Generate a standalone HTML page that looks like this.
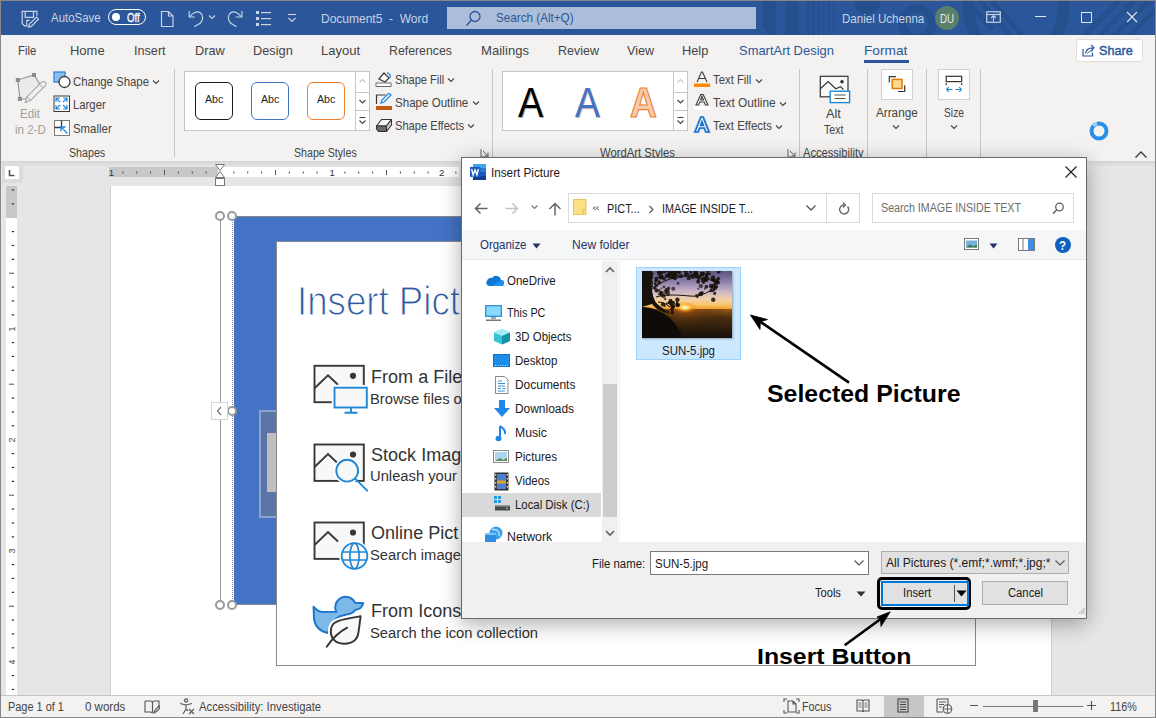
<!DOCTYPE html>
<html><head><meta charset="utf-8"><style>
html,body{margin:0;padding:0;}
body{width:1156px;height:718px;overflow:hidden;position:relative;background:#f3f2f1;font-family:"Liberation Sans",sans-serif;}
body div{position:absolute;box-sizing:border-box;}
.t{white-space:pre;line-height:1;transform-origin:0 0;}
</style></head><body>
<div style="left:0px;top:0px;width:1156px;height:35px;background:#2b579a;"></div>
<svg style="position:absolute;left:740px;top:1px;" width="415" height="34" viewBox="0 0 415 34"><defs><clipPath id="tbc"><rect width="415" height="34"/></clipPath></defs><g clip-path="url(#tbc)" fill="#264f8e">
<path d="M23 0h13v34h-6l-7-7z"/><rect x="45.5" y="0" width="13.5" height="34"/><rect x="67" y="0" width="2.7" height="34"/><rect x="72" y="0" width="3" height="34"/><rect x="77.5" y="0" width="2.5" height="34"/><rect x="82.7" y="0" width="1.7" height="34"/><rect x="88" y="0" width="1.6" height="34"/><rect x="93" y="0" width="1.5" height="30"/>
<circle cx="127.6" cy="0.7" r="13"/>
<circle cx="177" cy="22.4" r="15" fill="none" stroke="#264f8e" stroke-width="8"/>
<circle cx="276" cy="8" r="47.5" fill="none" stroke="#264f8e" stroke-width="11"/>
<g stroke="#264f8e" stroke-width="5"><path d="M240 0l30 34M252 0l30 34M228 0l24 28"/><path d="M345 34l34-34M360 34l34-34M375 34l34-34M390 34l25-25"/></g>
</g></svg>
<svg style="position:absolute;left:21px;top:10px;" width="19" height="19" viewBox="0 0 19 19"><g fill="none" stroke="#c8d3e6" stroke-width="1.2"><path d="M15.9 5.8V1.4H1.2V13.5L3.5 15.8H5.8V10.4H8.8"/><path d="M4.2 1.4V7.3H12.5V1.4"/><path d="M7.5 17.2l0.8-2.8 7.2-7.2 2 2-7.2 7.2z"/></g></svg>
<div class="t" style="left:51.20px;top:12px;font-size:12.5px;color:#c8d3e6;transform:scaleX(0.9151);">AutoSave</div>
<div style="left:108px;top:9px;width:38px;height:16px;border:1.4px solid #fff;border-radius:8px;"></div>
<div style="left:112px;top:13.3px;width:8px;height:8px;background:#fff;border-radius:50%;"></div>
<div class="t" style="left:127.00px;top:12px;font-size:12.5px;color:#fff;transform:scaleX(0.7769);-webkit-text-stroke:0.3px #fff;">Off</div>
<svg style="position:absolute;left:160px;top:10px;" width="15" height="18" viewBox="0 0 15 18"><path d="M1.5 1.5h7l4.5 4.5v10.5h-11.5z M8.5 1.5v4.5h4.5" fill="none" stroke="#c8d3e6" stroke-width="1.2"/></svg>
<svg style="position:absolute;left:187px;top:10px;" width="18" height="18" viewBox="0 0 18 18"><path d="M2.2 1.1V7H7.8" fill="none" stroke="#c8d3e6" stroke-width="1.2"/><path d="M3 6.5C5.5 3 9.8 0.6 13 2.5 16.5 5 16.5 9.5 13.5 13L7.2 16.7" fill="none" stroke="#c8d3e6" stroke-width="1.2"/></svg>
<svg style="position:absolute;left:208px;top:14px;" width="8" height="6" viewBox="0 0 8 6"><path d="M1 1.5l3 3 3-3" fill="none" stroke="#c8d3e6" stroke-width="1.1"/></svg>
<svg style="position:absolute;left:226px;top:10px;" width="18" height="18" viewBox="0 0 18 18"><path d="M15.9 1.1V7H9.7" fill="none" stroke="#c8d3e6" stroke-width="1.2"/><path d="M15 6.5C12.5 3 8 0.6 5 2.5 1.5 5 1.5 9.5 4.5 13L10.5 16.7" fill="none" stroke="#c8d3e6" stroke-width="1.2"/></svg>
<svg style="position:absolute;left:255px;top:10px;" width="17" height="17" viewBox="0 0 17 17"><g fill="#c8d3e6"><rect x="1" y="1" width="3" height="3"/><rect x="1" y="7" width="3" height="3"/><rect x="1" y="13" width="3" height="3"/><rect x="6" y="2" width="10" height="1.2"/><rect x="6" y="8" width="10" height="1.2"/><rect x="6" y="14" width="10" height="1.2"/></g></svg>
<svg style="position:absolute;left:287px;top:13px;" width="10" height="10" viewBox="0 0 10 10"><path d="M1 1.5h8" stroke="#c8d3e6" stroke-width="1.1"/><path d="M1.5 5l3.5 3.5 3.5-3.5" fill="none" stroke="#c8d3e6" stroke-width="1.1"/></svg>
<div class="t" style="left:321.30px;top:12px;font-size:13.65px;color:#c8d3e6;transform:scaleX(0.8795);">Document5  -  Word</div>
<div style="left:447px;top:7px;width:309px;height:22px;background:#abbdd8;"></div>
<svg style="position:absolute;left:465px;top:10px;" width="17" height="17" viewBox="0 0 17 17"><circle cx="10" cy="6.5" r="5" fill="none" stroke="#2b579a" stroke-width="1.3"/><path d="M6.5 10l-5 5.5" stroke="#2b579a" stroke-width="1.4"/></svg>
<div class="t" style="left:496.40px;top:11px;font-size:13.1px;color:#2b579a;transform:scaleX(0.8920);">Search (Alt+Q)</div>
<div class="t" style="left:841.70px;top:12px;font-size:13.65px;color:#c8d3e6;transform:scaleX(0.8472);">Daniel Uchenna</div>
<div style="left:935px;top:6px;width:24px;height:24px;background:#5b7f6a;border-radius:50%;"></div>
<div class="t" style="left:940.20px;top:12px;font-size:13.1px;color:#e6ecef;transform:scaleX(0.7401);">DU</div>
<svg style="position:absolute;left:986px;top:11px;" width="16" height="13" viewBox="0 0 16 13"><rect x="0.75" y="0.75" width="13.5" height="10.5" fill="none" stroke="#c8d3e6" stroke-width="1.2"/><path d="M0.75 3.5h13.5" stroke="#c8d3e6" stroke-width="1.2"/><path d="M7.5 10.5v-5.5M5 7l2.5-2.5 2.5 2.5" fill="none" stroke="#c8d3e6" stroke-width="1.1"/></svg>
<div style="left:1035px;top:16px;width:11px;height:1.2px;background:#dde4f0;"></div>
<div style="left:1081px;top:12px;width:10.5px;height:10.5px;border:1.2px solid #dde4f0;"></div>
<svg style="position:absolute;left:1126px;top:11px;" width="12" height="12" viewBox="0 0 12 12"><path d="M1 1l10 10M11 1l-10 10" stroke="#dde4f0" stroke-width="1.2"/></svg>
<div class="t" style="left:18.20px;top:44px;font-size:13.5px;color:#444444;transform:scaleX(0.8460);">File</div>
<div class="t" style="left:70.00px;top:44px;font-size:13.5px;color:#444444;transform:scaleX(0.9606);">Home</div>
<div class="t" style="left:134.00px;top:44px;font-size:13.5px;color:#444444;transform:scaleX(0.9359);">Insert</div>
<div class="t" style="left:195.00px;top:44px;font-size:13.5px;color:#444444;transform:scaleX(0.9450);">Draw</div>
<div class="t" style="left:253.00px;top:44px;font-size:13.5px;color:#444444;transform:scaleX(0.9470);">Design</div>
<div class="t" style="left:321.00px;top:44px;font-size:13.5px;color:#444444;transform:scaleX(0.9623);">Layout</div>
<div class="t" style="left:389.00px;top:44px;font-size:13.5px;color:#444444;transform:scaleX(0.9125);">References</div>
<div class="t" style="left:481.00px;top:44px;font-size:13.5px;color:#444444;transform:scaleX(0.9693);">Mailings</div>
<div class="t" style="left:558.00px;top:44px;font-size:13.5px;color:#444444;transform:scaleX(0.9254);">Review</div>
<div class="t" style="left:626.90px;top:44px;font-size:13.5px;color:#444444;transform:scaleX(0.9328);">View</div>
<div class="t" style="left:682.20px;top:44px;font-size:13.5px;color:#444444;transform:scaleX(0.9471);">Help</div>
<div class="t" style="left:739.00px;top:44px;font-size:13.5px;color:#2b579a;transform:scaleX(0.9582);">SmartArt Design</div>
<div class="t" style="left:864.40px;top:44px;font-size:13.5px;color:#2b579a;transform:scaleX(1.0151);">Format</div>
<div style="left:864px;top:60px;width:45px;height:3px;background:#2b579a;"></div>
<div style="left:1076px;top:39px;width:67px;height:23px;background:#fff;border:1px solid #e1dfdd;border-radius:3px;"></div>
<svg style="position:absolute;left:1082px;top:43px;" width="15" height="15" viewBox="0 0 15 15"><path d="M1 6v7h9.5V9.5" fill="none" stroke="#2b579a" stroke-width="1.2"/><path d="M3.5 10.5C4 7 6.5 4.8 11 4.8M9 1.8l3 3-3 3" fill="none" stroke="#2b579a" stroke-width="1.2"/><path d="M5.5 10.5C6.5 8.5 8.5 7.6 11 7.6" fill="none" stroke="#2b579a" stroke-width="1"/></svg>
<div class="t" style="left:1099.20px;top:44px;font-size:13.65px;color:#2b579a;transform:scaleX(0.9254);-webkit-text-stroke:0.45px #2b579a;">Share</div>
<svg style="position:absolute;left:14px;top:72px;" width="34" height="34" viewBox="0 0 34 34"><path d="M3.8 8L20 3 27 14 12 27 5.9 26.9z" fill="#ebebeb" stroke="#9a9a9a" stroke-width="1.2"/>
<g fill="#8a8a8a"><rect x="1.8" y="6" width="4" height="4"/><rect x="18" y="1" width="4" height="4"/><rect x="3.9" y="24.9" width="4" height="4"/></g>
<path d="M11.3 30.5l1.8-5.8 14.5-14.5a2.4 2.4 0 0 1 3.6 3.6L16.7 28.3z" fill="#f0f0f0" stroke="#a6a6a6" stroke-width="1.1"/><path d="M25.5 12.3l3.4 3.4M13.1 24.7l3.6 3.6" stroke="#a6a6a6" stroke-width="1"/></svg>
<div class="t" style="left:20.00px;top:108px;font-size:12.5px;color:#a19f9d;transform:scaleX(0.9286);">Edit</div>
<div class="t" style="left:14.50px;top:124px;font-size:12.5px;color:#a19f9d;transform:scaleX(0.9235);">in 2-D</div>
<svg style="position:absolute;left:53px;top:71px;" width="18" height="18" viewBox="0 0 18 18"><rect x="1" y="1" width="11" height="10" fill="#8cbdf0" stroke="#2b7cd3" stroke-width="1.2"/><circle cx="11.5" cy="11" r="5.5" fill="#fff" stroke="#3b3a39" stroke-width="1.3"/></svg>
<div class="t" style="left:73.30px;top:76px;font-size:12.8px;color:#444444;transform:scaleX(0.8899);">Change Shape</div>
<svg style="position:absolute;left:152px;top:79px;" width="8" height="6" viewBox="0 0 8 6"><path d="M1 1.5l3 3 3-3" fill="none" stroke="#444" stroke-width="1.1"/></svg>
<svg style="position:absolute;left:53px;top:95px;" width="18" height="18" viewBox="0 0 18 18"><rect x="1" y="1" width="15.5" height="15.5" fill="#fff" stroke="#3b3a39" stroke-width="1"/><g stroke="#1e88e5" stroke-width="1.2" fill="none"><path d="M3 7V3h4M10 3h4v4M14 10v4h-4M7 14H3v-4M3.5 3.5l3.5 3.5M13.5 3.5l-3.5 3.5M13.5 13.5l-3.5-3.5M3.5 13.5l3.5-3.5"/></g></svg>
<div class="t" style="left:73.30px;top:99px;font-size:12.8px;color:#444444;transform:scaleX(0.8837);">Larger</div>
<svg style="position:absolute;left:53px;top:119px;" width="18" height="18" viewBox="0 0 18 18"><rect x="1.5" y="1.5" width="15" height="15" fill="#fff" stroke="#7a7a7a" stroke-width="1"/><path d="M1.5 8.5H8.5V1.5" fill="none" stroke="#3b3a39" stroke-width="1.3"/><path d="M14.5 14.5L8 8M8 12.5V8h4.5" fill="none" stroke="#1e88e5" stroke-width="1.3"/></svg>
<div class="t" style="left:73.30px;top:123px;font-size:12.8px;color:#444444;transform:scaleX(0.8919);">Smaller</div>
<div class="t" style="left:69.40px;top:147px;font-size:12.5px;color:#444444;transform:scaleX(0.8538);">Shapes</div>
<div style="left:174px;top:69px;width:1px;height:88px;background:#c8c6c4;"></div>
<div style="left:184px;top:71px;width:186px;height:60px;background:#fff;border:1px solid #c8c6c4;"></div>
<div style="left:355px;top:71px;width:15px;height:60px;border-left:1px solid #c8c6c4;"></div>
<div style="left:355px;top:92px;width:15px;height:19px;border:1px solid #c8c6c4;background:#fff;"></div>
<div style="left:355px;top:111px;width:15px;height:20px;border:1px solid #c8c6c4;border-top:none;"></div>
<svg style="position:absolute;left:356px;top:73px;" width="13" height="16" viewBox="0 0 13 16"><path d="M3.5 9.5l3-3 3 3" fill="none" stroke="#c8c6c4" stroke-width="1.1"/></svg>
<svg style="position:absolute;left:356px;top:93px;" width="13" height="17" viewBox="0 0 13 17"><path d="M3.5 7l3 3 3-3" fill="none" stroke="#444" stroke-width="1.1"/></svg>
<svg style="position:absolute;left:356px;top:112px;" width="13" height="18" viewBox="0 0 13 18"><path d="M3.5 5.5h6" stroke="#444" stroke-width="1.1"/><path d="M3.5 8.5l3 3 3-3" fill="none" stroke="#444" stroke-width="1.1"/></svg>
<div style="left:195px;top:82px;width:38px;height:38px;border:1.9px solid #1a1a1a;border-radius:6px;background:#fff;"></div>
<div class="t" style="left:205.00px;top:93px;font-size:11.65px;color:#1f1f1f;transform:scaleX(0.9167);">Abc</div>
<div style="left:251px;top:82px;width:38px;height:38px;border:1.9px solid #4472c4;border-radius:6px;background:#fff;"></div>
<div class="t" style="left:260.80px;top:93px;font-size:11.65px;color:#1f1f1f;transform:scaleX(0.9167);">Abc</div>
<div style="left:307px;top:82px;width:38px;height:38px;border:1.9px solid #ed7d31;border-radius:6px;background:#fff;"></div>
<div class="t" style="left:316.80px;top:93px;font-size:11.65px;color:#1f1f1f;transform:scaleX(0.9167);">Abc</div>
<div class="t" style="left:294.40px;top:147px;font-size:12.5px;color:#444444;transform:scaleX(0.8512);">Shape Styles</div>
<svg style="position:absolute;left:375px;top:70px;" width="18" height="18" viewBox="0 0 18 18"><path d="M4 9l5-6 5 5-4 4z" fill="#fff" stroke="#3b3a39" stroke-width="1.2"/><path d="M12 3c2 0 4 2 3 5" fill="none" stroke="#1e88e5" stroke-width="1.4"/><rect x="1" y="13" width="15" height="3.5" fill="#fff" stroke="#6e6e6e" stroke-width="1"/></svg>
<div class="t" style="left:395.40px;top:74px;font-size:12.8px;color:#444444;transform:scaleX(0.8643);">Shape Fill</div>
<svg style="position:absolute;left:447px;top:77px;" width="8" height="6" viewBox="0 0 8 6"><path d="M1 1.5l3 3 3-3" fill="none" stroke="#444" stroke-width="1.1"/></svg>
<svg style="position:absolute;left:375px;top:93px;" width="18" height="18" viewBox="0 0 18 18"><path d="M1.5 11V2h9" fill="none" stroke="#3b3a39" stroke-width="1.2"/><path d="M6 10l1-3 7-7 2 2-7 7z" fill="#fff" stroke="#1e88e5" stroke-width="1.3"/><rect x="1" y="13" width="16" height="4" fill="#c55a11"/></svg>
<div class="t" style="left:395.40px;top:97px;font-size:12.8px;color:#444444;transform:scaleX(0.9035);">Shape Outline</div>
<svg style="position:absolute;left:472px;top:100px;" width="8" height="6" viewBox="0 0 8 6"><path d="M1 1.5l3 3 3-3" fill="none" stroke="#444" stroke-width="1.1"/></svg>
<svg style="position:absolute;left:375px;top:117px;" width="18" height="16" viewBox="0 0 18 16"><path d="M1.5 9L6.5 2.5H16.5L11.5 9z" fill="#f5f5f5" stroke="#333" stroke-width="1.1" stroke-linejoin="round"/><path d="M1.5 9H11.5V14.5H3.5L1.5 12z" fill="#6a6a6a" stroke="#333" stroke-width="1.1" stroke-linejoin="round"/><path d="M11.5 9L16.5 2.5V8L11.5 14.5z" fill="#d0d0d0" stroke="#333" stroke-width="1.1" stroke-linejoin="round"/></svg>
<div class="t" style="left:395.40px;top:120px;font-size:12.8px;color:#444444;transform:scaleX(0.8696);">Shape Effects</div>
<svg style="position:absolute;left:467px;top:123px;" width="8" height="6" viewBox="0 0 8 6"><path d="M1 1.5l3 3 3-3" fill="none" stroke="#444" stroke-width="1.1"/></svg>
<svg style="position:absolute;left:480px;top:148px;" width="10" height="10" viewBox="0 0 10 10"><path d="M1 1h0M1 1v8h8" fill="none" stroke="#666" stroke-width="1"/><path d="M3 3l5 5M8 4.5V8H4.5" fill="none" stroke="#666" stroke-width="1"/></svg>
<div style="left:492px;top:69px;width:1px;height:88px;background:#c8c6c4;"></div>
<div style="left:502px;top:71px;width:186px;height:60px;background:#fff;border:1px solid #c8c6c4;"></div>
<div style="left:673px;top:71px;width:15px;height:60px;border-left:1px solid #c8c6c4;"></div>
<div style="left:673px;top:92px;width:15px;height:19px;border:1px solid #c8c6c4;background:#fff;"></div>
<div style="left:673px;top:111px;width:15px;height:20px;border:1px solid #c8c6c4;border-top:none;"></div>
<svg style="position:absolute;left:674px;top:73px;" width="13" height="16" viewBox="0 0 13 16"><path d="M3.5 9.5l3-3 3 3" fill="none" stroke="#c8c6c4" stroke-width="1.1"/></svg>
<svg style="position:absolute;left:674px;top:93px;" width="13" height="17" viewBox="0 0 13 17"><path d="M3.5 7l3 3 3-3" fill="none" stroke="#444" stroke-width="1.1"/></svg>
<svg style="position:absolute;left:674px;top:112px;" width="13" height="18" viewBox="0 0 13 18"><path d="M3.5 5.5h6" stroke="#444" stroke-width="1.1"/><path d="M3.5 8.5l3 3 3-3" fill="none" stroke="#444" stroke-width="1.1"/></svg>
<div class="t" style="left:518.20px;top:81px;font-size:43.0px;color:#000;transform:scaleX(0.8821);text-shadow:1px 1px 1px rgba(0,0,0,0.35);">A</div>
<div class="t" style="left:575.30px;top:81px;font-size:43.0px;color:#4472c4;transform:scaleX(0.8682);text-shadow:1px 1px 1px rgba(0,0,0,0.3);">A</div>
<div class="t" style="left:630.00px;top:81px;font-size:43.0px;color:#f8cbad;font-weight:bold;transform:scaleX(0.8665);-webkit-text-stroke:1.2px #ed7d31;">A</div>
<svg style="position:absolute;left:693px;top:71px;" width="18" height="17" viewBox="0 0 18 17"><path d="M4 11L8.5 1h1L14 11M5.7 7.5h6.6" fill="none" stroke="#3b3a39" stroke-width="1.1"/><rect x="1" y="12.5" width="16" height="3.5" fill="#ff8c00"/></svg>
<div class="t" style="left:713.40px;top:74px;font-size:12.8px;color:#444444;transform:scaleX(0.8852);">Text Fill</div>
<svg style="position:absolute;left:755px;top:78px;" width="8" height="6" viewBox="0 0 8 6"><path d="M1 1.5l3 3 3-3" fill="none" stroke="#444" stroke-width="1.1"/></svg>
<svg style="position:absolute;left:693px;top:93px;" width="18" height="18" viewBox="0 0 18 18"><rect x="1" y="13" width="16" height="4" fill="#fff"/><path d="M3 12L7.8 1.5h2.4L15 12h-2.6L11.3 9H6.7L5.6 12z M7.5 7h3L9 3.3z" fill="#fff" stroke="#3b3a39" stroke-width="1.1"/></svg>
<div class="t" style="left:713.40px;top:97px;font-size:12.8px;color:#444444;transform:scaleX(0.9263);">Text Outline</div>
<svg style="position:absolute;left:779px;top:101px;" width="8" height="6" viewBox="0 0 8 6"><path d="M1 1.5l3 3 3-3" fill="none" stroke="#444" stroke-width="1.1"/></svg>
<svg style="position:absolute;left:693px;top:116px;" width="18" height="17" viewBox="0 0 18 17"><path d="M2 16L8 1h2l6 15h-3l-1.5-4h-5L5 16z M7.5 9.5h3L9 5.5z" fill="#fff" stroke="#9ccaf0" stroke-width="3"/><path d="M2 16L8 1h2l6 15h-3l-1.5-4h-5L5 16z M7.5 9.5h3L9 5.5z" fill="#fff" stroke="#1a6fc9" stroke-width="1.6"/></svg>
<div class="t" style="left:713.40px;top:120px;font-size:12.8px;color:#444444;transform:scaleX(0.8935);">Text Effects</div>
<svg style="position:absolute;left:775px;top:124px;" width="8" height="6" viewBox="0 0 8 6"><path d="M1 1.5l3 3 3-3" fill="none" stroke="#444" stroke-width="1.1"/></svg>
<div class="t" style="left:600.20px;top:147px;font-size:12.5px;color:#444444;transform:scaleX(0.9023);">WordArt Styles</div>
<svg style="position:absolute;left:787px;top:148px;" width="10" height="10" viewBox="0 0 10 10"><path d="M1 1v8h8" fill="none" stroke="#666" stroke-width="1"/><path d="M3 3l5 5M8 4.5V8H4.5" fill="none" stroke="#666" stroke-width="1"/></svg>
<div style="left:799px;top:69px;width:1px;height:88px;background:#c8c6c4;"></div>
<svg style="position:absolute;left:819px;top:75px;" width="33" height="29" viewBox="0 0 33 29"><rect x="1.3" y="1.3" width="27.7" height="20.5" fill="#f8f8f8" stroke="#333" stroke-width="1.2"/><path d="M1.3 13.8L9.2 6.6 16.8 13.8 21.6 11.7 24.4 14.5" fill="none" stroke="#333" stroke-width="1.2"/><circle cx="23" cy="6.8" r="1.8" fill="#333"/><rect x="11.2" y="16.2" width="19.4" height="11.4" fill="#fff" stroke="#1e88d6" stroke-width="1.4"/><path d="M15.4 20h11.1M15.4 23.5h11.1" stroke="#555" stroke-width="1"/></svg>
<div class="t" style="left:826.30px;top:108px;font-size:12.5px;color:#444444;transform:scaleX(1.0214);">Alt</div>
<div class="t" style="left:824.20px;top:124px;font-size:12.5px;color:#444444;transform:scaleX(0.8462);">Text</div>
<div class="t" style="left:803.00px;top:147px;font-size:12.5px;color:#444444;transform:scaleX(0.8902);">Accessibility</div>
<div style="left:867px;top:69px;width:1px;height:88px;background:#c8c6c4;"></div>
<div style="left:881px;top:69px;width:32px;height:31px;background:#fff;border:1px solid #d2d0ce;"></div>
<svg style="position:absolute;left:888px;top:75px;" width="18" height="18" viewBox="0 0 18 18"><path d="M1.3 7.6V1.6H8M16.7 10.3V16.5H10" fill="none" stroke="#333" stroke-width="1.2"/><rect x="4.2" y="4.4" width="9.8" height="9.1" fill="#fbd990" stroke="#e47a09" stroke-width="1.5"/></svg>
<div class="t" style="left:876.30px;top:107px;font-size:12.5px;color:#444444;transform:scaleX(0.9376);">Arrange</div>
<svg style="position:absolute;left:892px;top:124px;" width="8" height="6" viewBox="0 0 8 6"><path d="M1 1.5l3 3 3-3" fill="none" stroke="#444" stroke-width="1.1"/></svg>
<div style="left:926px;top:69px;width:1px;height:88px;background:#c8c6c4;"></div>
<div style="left:938px;top:69px;width:32px;height:31px;background:#fff;border:1px solid #d2d0ce;"></div>
<svg style="position:absolute;left:945px;top:75px;" width="18" height="19" viewBox="0 0 18 19"><rect x="1.2" y="1.3" width="15.5" height="5.3" fill="#fff" stroke="#333" stroke-width="1.2"/><path d="M1.2 8v2.2M16.7 8v2.2" stroke="#333" stroke-width="1.1"/><path d="M1.5 14.5h6M1.5 14.5l2.3-2.3M1.5 14.5l2.3 2.3M16.5 14.5h-6M16.5 14.5l-2.3-2.3M16.5 14.5l-2.3 2.3" fill="none" stroke="#1e88d6" stroke-width="1.2"/></svg>
<div class="t" style="left:944.00px;top:107px;font-size:12.5px;color:#444444;transform:scaleX(0.8226);">Size</div>
<svg style="position:absolute;left:949.5px;top:124px;" width="8" height="6" viewBox="0 0 8 6"><path d="M1 1.5l3 3 3-3" fill="none" stroke="#444" stroke-width="1.1"/></svg>
<div style="left:980px;top:69px;width:1px;height:88px;background:#c8c6c4;"></div>
<svg style="position:absolute;left:1088px;top:120px;" width="22" height="22" viewBox="0 0 22 22"><circle cx="11" cy="11" r="7.5" fill="none" stroke="#2b8fe8" stroke-width="4"/><path d="M5 5.5a8 8 0 0 1 4-2" stroke="#a7cdf2" stroke-width="4" fill="none"/></svg>
<svg style="position:absolute;left:1134px;top:150px;" width="14" height="9" viewBox="0 0 14 9"><path d="M1.5 7.5l5.5-5.5 5.5 5.5" fill="none" stroke="#3b3a39" stroke-width="1.3"/></svg>
<div style="left:0px;top:161px;width:1156px;height:535px;background:#e6e6e6;"></div>
<div style="left:0px;top:161px;width:1156px;height:6px;background:linear-gradient(#d4d4d4,#e6e6e6);"></div>
<div style="left:2px;top:162px;width:21px;height:21px;background:#dcdcdc;"></div>
<div style="left:5px;top:166px;width:14px;height:13px;background:#fff;"></div>
<svg style="position:absolute;left:5px;top:166px;" width="14" height="13" viewBox="0 0 14 13"><path d="M4.5 4v5.5h5" fill="none" stroke="#555" stroke-width="1.6"/></svg>
<div style="left:109px;top:167px;width:350px;height:10px;background:#fff;"></div>
<div style="left:109px;top:167px;width:109px;height:10px;background:#c8c8c8;"></div>
<svg style="position:absolute;left:0px;top:167px;" width="470" height="10" viewBox="0 0 470 10"><rect x="122.38" y="4.5" width="1" height="2" fill="#444"/><rect x="136.25" y="4.5" width="1" height="2" fill="#444"/><rect x="150.12" y="4.5" width="1" height="2" fill="#444"/><rect x="164.00" y="3" width="1" height="5" fill="#555"/><rect x="177.88" y="4.5" width="1" height="2" fill="#444"/><rect x="191.75" y="4.5" width="1" height="2" fill="#444"/><rect x="205.62" y="4.5" width="1" height="2" fill="#444"/><rect x="233.38" y="4.5" width="1" height="2" fill="#444"/><rect x="247.25" y="4.5" width="1" height="2" fill="#444"/><rect x="261.12" y="4.5" width="1" height="2" fill="#444"/><rect x="275.00" y="3" width="1" height="5" fill="#555"/><rect x="288.88" y="4.5" width="1" height="2" fill="#444"/><rect x="302.75" y="4.5" width="1" height="2" fill="#444"/><rect x="316.62" y="4.5" width="1" height="2" fill="#444"/><rect x="344.38" y="4.5" width="1" height="2" fill="#444"/><rect x="358.25" y="4.5" width="1" height="2" fill="#444"/><rect x="372.12" y="4.5" width="1" height="2" fill="#444"/><rect x="386.00" y="3" width="1" height="5" fill="#555"/><rect x="399.88" y="4.5" width="1" height="2" fill="#444"/><rect x="413.75" y="4.5" width="1" height="2" fill="#444"/><rect x="427.62" y="4.5" width="1" height="2" fill="#444"/><rect x="455.38" y="4.5" width="1" height="2" fill="#444"/></svg>
<div class="t" style="left:108.80px;top:168px;font-size:9.6px;color:#333;">1</div>
<div class="t" style="left:329.50px;top:168px;font-size:9.6px;color:#333;">1</div>
<div class="t" style="left:439.00px;top:168px;font-size:9.6px;color:#333;">2</div>
<svg style="position:absolute;left:214px;top:163px;" width="13" height="24" viewBox="0 0 13 24"><path d="M1.5 1.5h9l-4.5 6z M1.5 14.5h9l-4.5-6z" fill="#fff" stroke="#777" stroke-width="1"/><rect x="1.5" y="15.5" width="9" height="7" fill="#fff" stroke="#777" stroke-width="1"/></svg>
<div style="left:6px;top:186px;width:11px;height:509px;background:#fff;"></div>
<div style="left:6px;top:186px;width:11px;height:32px;background:#c8c8c8;"></div>
<svg style="position:absolute;left:6px;top:0px;" width="11" height="718" viewBox="0 0 11 718"><rect x="5.7" y="189.35" width="2.4" height="1.2" fill="#333"/><rect x="5.7" y="203.22" width="2.4" height="1.2" fill="#333"/><rect x="5.7" y="230.97" width="2.4" height="1.2" fill="#333"/><rect x="5.7" y="244.85" width="2.4" height="1.2" fill="#333"/><rect x="5.7" y="258.72" width="2.4" height="1.2" fill="#333"/><rect x="3" y="272.70" width="5" height="1" fill="#555"/><rect x="5.7" y="286.47" width="2.4" height="1.2" fill="#333"/><rect x="5.7" y="300.35" width="2.4" height="1.2" fill="#333"/><rect x="5.7" y="314.22" width="2.4" height="1.2" fill="#333"/><rect x="5.7" y="341.97" width="2.4" height="1.2" fill="#333"/><rect x="5.7" y="355.85" width="2.4" height="1.2" fill="#333"/><rect x="5.7" y="369.72" width="2.4" height="1.2" fill="#333"/><rect x="3" y="383.70" width="5" height="1" fill="#555"/><rect x="5.7" y="397.47" width="2.4" height="1.2" fill="#333"/><rect x="5.7" y="411.35" width="2.4" height="1.2" fill="#333"/><rect x="5.7" y="425.22" width="2.4" height="1.2" fill="#333"/><rect x="5.7" y="452.97" width="2.4" height="1.2" fill="#333"/><rect x="5.7" y="466.85" width="2.4" height="1.2" fill="#333"/><rect x="5.7" y="480.72" width="2.4" height="1.2" fill="#333"/><rect x="3" y="494.70" width="5" height="1" fill="#555"/><rect x="5.7" y="508.47" width="2.4" height="1.2" fill="#333"/><rect x="5.7" y="522.35" width="2.4" height="1.2" fill="#333"/><rect x="5.7" y="536.23" width="2.4" height="1.2" fill="#333"/><rect x="5.7" y="563.98" width="2.4" height="1.2" fill="#333"/><rect x="5.7" y="577.85" width="2.4" height="1.2" fill="#333"/><rect x="5.7" y="591.73" width="2.4" height="1.2" fill="#333"/><rect x="3" y="605.70" width="5" height="1" fill="#555"/><rect x="5.7" y="619.48" width="2.4" height="1.2" fill="#333"/><rect x="5.7" y="633.35" width="2.4" height="1.2" fill="#333"/><rect x="5.7" y="647.23" width="2.4" height="1.2" fill="#333"/><rect x="5.7" y="674.98" width="2.4" height="1.2" fill="#333"/><rect x="5.7" y="688.85" width="2.4" height="1.2" fill="#333"/></svg>
<div class="t" style="left:6px;top:323.7px;width:11px;height:10px;font-size:9px;color:#444;text-align:center;transform:rotate(-90deg);transform-origin:50% 50%;line-height:10px;">1</div>
<div class="t" style="left:6px;top:434.7px;width:11px;height:10px;font-size:9px;color:#444;text-align:center;transform:rotate(-90deg);transform-origin:50% 50%;line-height:10px;">2</div>
<div class="t" style="left:6px;top:545.7px;width:11px;height:10px;font-size:9px;color:#444;text-align:center;transform:rotate(-90deg);transform-origin:50% 50%;line-height:10px;">3</div>
<div class="t" style="left:6px;top:656.7px;width:11px;height:10px;font-size:9px;color:#444;text-align:center;transform:rotate(-90deg);transform-origin:50% 50%;line-height:10px;">4</div>
<div style="left:110px;top:186px;width:942px;height:510px;background:#fff;border-left:1px solid #d0d0d0;border-right:1px solid #d0d0d0;"></div>
<div style="left:234px;top:217px;width:240px;height:387px;background:#4472c4;"></div>
<div style="left:233px;top:216px;width:240px;height:1px;background:#8a8a8a;"></div>
<div style="left:233px;top:604px;width:240px;height:1px;background:#8a8a8a;"></div>
<div style="left:220px;top:216px;width:1px;height:389px;background:#9a9a9a;"></div>
<div style="left:232px;top:216px;width:1px;height:389px;border-left:1px dotted #888;"></div>
<div style="left:259px;top:410px;width:20px;height:108px;background:#5a76a9;border:2px solid #8ca3cb;"></div>
<div style="left:267px;top:433px;width:12px;height:59px;background:#bfbfbf;"></div>
<div style="left:215px;top:211px;width:10px;height:10px;background:#fff;border:2px solid #9a9a9a;border-radius:50%;"></div>
<div style="left:227px;top:211px;width:10px;height:10px;background:#fff;border:2px solid #9a9a9a;border-radius:50%;"></div>
<div style="left:215px;top:600px;width:10px;height:10px;background:#fff;border:2px solid #9a9a9a;border-radius:50%;"></div>
<div style="left:227px;top:600px;width:10px;height:10px;background:#fff;border:2px solid #9a9a9a;border-radius:50%;"></div>
<div style="left:227px;top:406px;width:10px;height:10px;background:#fff;border:2px solid #9a9a9a;border-radius:50%;"></div>
<div style="left:211px;top:402px;width:17px;height:18px;background:#fff;border:1px solid #d6d6d6;"></div>
<svg style="position:absolute;left:211px;top:402px;" width="17" height="18" viewBox="0 0 17 18"><path d="M10 5l-3.5 4 3.5 4" fill="none" stroke="#777" stroke-width="1.2"/></svg>
<div style="left:276px;top:241px;width:700px;height:425px;background:#fff;border:1px solid #8a8a8a;"></div>
<div class="t" style="left:296.80px;top:281px;font-size:41.3px;color:#2f5aa0;transform:scaleX(0.8877);-webkit-text-stroke:1.1px #fff;">Insert Pict</div>
<svg style="position:absolute;left:313px;top:364px;" width="58" height="52" viewBox="0 0 58 52"><rect x="1.5" y="1.8" width="49.3" height="36.4" fill="#f8f8f8" stroke="#383838" stroke-width="1.9"/><path d="M1.5 24.3L15 11.4L25 20.8" fill="none" stroke="#383838" stroke-width="1.9"/><circle cx="40" cy="11.8" r="3.1" fill="#383838"/><rect x="21.5" y="23.7" width="32.3" height="19.8" fill="#f8f8f8" stroke="#fff" stroke-width="5.5"/><rect x="21.5" y="23.7" width="32.3" height="19.8" fill="#f8f8f8" stroke="#1e88d6" stroke-width="1.9"/><path d="M38 43.5v5M31.5 48.8h13" stroke="#1e88d6" stroke-width="1.9"/></svg>
<svg style="position:absolute;left:313px;top:443px;" width="58" height="52" viewBox="0 0 58 52"><rect x="1.5" y="1.5" width="49.3" height="36.4" fill="#f8f8f8" stroke="#383838" stroke-width="1.9"/><path d="M1.5 24.0L15 11.1L25 20.5" fill="none" stroke="#383838" stroke-width="1.9"/><circle cx="40" cy="11.5" r="3.1" fill="#383838"/><circle cx="34.2" cy="27.7" r="10.9" fill="#f8f8f8" stroke="#fff" stroke-width="5"/><circle cx="34.2" cy="27.7" r="10.9" fill="#f8f8f8" stroke="#1e88d6" stroke-width="1.9"/><path d="M42.2 35.7l12 12" stroke="#1e88d6" stroke-width="1.9" stroke-linecap="round"/></svg>
<svg style="position:absolute;left:313px;top:521px;" width="58" height="52" viewBox="0 0 58 52"><rect x="1.5" y="1.5" width="49.3" height="36.4" fill="#f8f8f8" stroke="#383838" stroke-width="1.9"/><path d="M1.5 24.0L15 11.1L25 20.5" fill="none" stroke="#383838" stroke-width="1.9"/><circle cx="40" cy="11.5" r="3.1" fill="#383838"/><circle cx="41.5" cy="35" r="12.8" fill="#f8f8f8" stroke="#fff" stroke-width="5"/><circle cx="41.5" cy="35" r="12.8" fill="#f8f8f8" stroke="#1e88d6" stroke-width="1.8"/><ellipse cx="41.5" cy="35" rx="4.6" ry="12.8" fill="none" stroke="#1e88d6" stroke-width="1.7"/><path d="M29 31h25M29 39h25" stroke="#1e88d6" stroke-width="1.7"/></svg>
<svg style="position:absolute;left:308px;top:588px;" width="60" height="64" viewBox="0 0 60 64"><path d="M5.5 18.7C8 21.5 10.5 23.9 14 23.9H28.2A10.3 10.3 0 1 1 47.2 14.8L55.3 15.2C54 19.5 51 21.5 47.5 21.8 45 24.8 42 26.3 38.5 26.5 30 28 24 33 22 40L19.6 45C11 43 6.5 37 6 30z" fill="#7db8ea" stroke="#1a73c8" stroke-width="1.9" stroke-linejoin="round"/><path d="M52.6 28.1C45 30 33 30.5 26.7 34.8 22 38 21.5 47 25.8 51.7 29 55.5 33 56 37.4 55.7 46 55 50 50 50.5 44 51.5 38 52 33 52.6 28.1z" fill="#f8f8f8" stroke="#fff" stroke-width="6" stroke-linejoin="round"/><path d="M52.6 28.1C45 30 33 30.5 26.7 34.8 22 38 21.5 47 25.8 51.7 29 55.5 33 56 37.4 55.7 46 55 50 50 50.5 44 51.5 38 52 33 52.6 28.1z" fill="#f8f8f8" stroke="#333" stroke-width="1.9" stroke-linejoin="round"/><path d="M18.7 58.8C24 51 31 44 39.2 39.7" fill="none" stroke="#333" stroke-width="1.9" stroke-linecap="round"/></svg>
<div class="t" style="left:370.50px;top:368px;font-size:18.15px;color:#333;transform:scaleX(0.9950);">From a File</div>
<div class="t" style="left:370.00px;top:392px;font-size:14.25px;color:#333;transform:scaleX(1.0350);">Browse files o</div>
<div class="t" style="left:370.50px;top:446px;font-size:18.15px;color:#333;transform:scaleX(0.9950);">Stock Imag</div>
<div class="t" style="left:370.00px;top:469px;font-size:14.25px;color:#333;transform:scaleX(1.0350);">Unleash your i</div>
<div class="t" style="left:370.50px;top:524px;font-size:18.15px;color:#333;transform:scaleX(0.9950);">Online Pict</div>
<div class="t" style="left:370.00px;top:548px;font-size:14.25px;color:#333;transform:scaleX(1.0350);">Search images</div>
<div class="t" style="left:370.50px;top:602px;font-size:18.15px;color:#333;transform:scaleX(0.9950);">From Icons</div>
<div class="t" style="left:370.00px;top:626px;font-size:14.25px;color:#333;transform:scaleX(1.0350);">Search the icon collection</div>
<div style="left:0px;top:695px;width:1156px;height:23px;background:#f3f2f1;border-top:1px solid #c8c6c4;"></div>
<div class="t" style="left:8.20px;top:701px;font-size:12.5px;color:#444444;transform:scaleX(0.8743);">Page 1 of 1</div>
<div class="t" style="left:85.30px;top:701px;font-size:12.5px;color:#444444;transform:scaleX(0.9209);">0 words</div>
<svg style="position:absolute;left:144px;top:699px;" width="16" height="15" viewBox="0 0 16 15"><path d="M1 2h5.5c1 0 2 .8 2 2v10M8.5 4c0-1.2 1-2 2-2H15v7" fill="none" stroke="#555" stroke-width="1.1"/><path d="M1 2v11h6l1.5 1" fill="none" stroke="#555" stroke-width="1.1"/><path d="M10 14l1-3 4-4 1.5 1.5-4 4z" fill="none" stroke="#555" stroke-width="1.1"/></svg>
<svg style="position:absolute;left:179px;top:698px;" width="17" height="17" viewBox="0 0 17 17"><circle cx="7" cy="2.5" r="1.6" fill="none" stroke="#555" stroke-width="1.1"/><path d="M1 5.5l6 1.5 6-1.5M7 7v4l-3 5M7 11l2 2" fill="none" stroke="#555" stroke-width="1.1"/><path d="M10 11l5 5M15 11l-5 5" stroke="#555" stroke-width="1.1"/></svg>
<div class="t" style="left:198.50px;top:701px;font-size:12.5px;color:#444444;transform:scaleX(0.9013);">Accessibility: Investigate</div>
<svg style="position:absolute;left:783px;top:698px;" width="17" height="16" viewBox="0 0 17 16"><path d="M1 4V1h3M13 1h3v3M16 12v3h-3M4 15H1v-3" fill="none" stroke="#555" stroke-width="1.1"/><path d="M5 3h5l3 3v8H5z M10 3v3h3" fill="none" stroke="#555" stroke-width="1.1"/></svg>
<div class="t" style="left:802.40px;top:701px;font-size:12.5px;color:#444444;transform:scaleX(0.8638);">Focus</div>
<svg style="position:absolute;left:856px;top:699px;" width="14" height="13" viewBox="0 0 14 13"><path d="M1 1h5l1 1 1-1h5v11H8l-1 1-1-1H1z M7 2v10" fill="none" stroke="#555" stroke-width="1.1"/><path d="M2.5 4h3M2.5 6h3M2.5 8h3M8.5 4h3M8.5 6h3M8.5 8h3" stroke="#555" stroke-width="0.8"/></svg>
<div style="left:884px;top:696px;width:40px;height:21px;background:#c8c6c4;"></div>
<svg style="position:absolute;left:897px;top:698px;" width="12" height="15" viewBox="0 0 12 15"><rect x="1" y="1" width="10" height="13" fill="none" stroke="#444" stroke-width="1.1"/><path d="M3 4h6M3 6.5h6M3 9h6M3 11.5h6" stroke="#444" stroke-width="1"/></svg>
<svg style="position:absolute;left:936px;top:698px;" width="17" height="16" viewBox="0 0 17 16"><path d="M1 1h11v6M1 1v13h6" fill="none" stroke="#555" stroke-width="1.1"/><path d="M3 4h7M3 6.5h5M3 9h3" stroke="#555" stroke-width="1"/><circle cx="11.5" cy="11" r="4.3" fill="#f3f2f1" stroke="#555" stroke-width="1.1"/><path d="M7.2 11h8.6M11.5 6.7v8.6" stroke="#555" stroke-width="0.9"/></svg>
<div style="left:970px;top:705px;width:8px;height:1px;background:#555;"></div>
<div style="left:983px;top:706px;width:100px;height:1px;background:#777;"></div>
<div style="left:1033px;top:700px;width:5px;height:12px;background:#777;"></div>
<svg style="position:absolute;left:1086px;top:700px;" width="11" height="11" viewBox="0 0 11 11"><path d="M5.5 1v9M1 5.5h9" stroke="#555" stroke-width="1.1"/></svg>
<div class="t" style="left:1109.60px;top:701px;font-size:12.5px;color:#444444;transform:scaleX(0.8602);">116%</div>
<div style="left:0px;top:0px;width:1156px;height:1px;background:#8a8886;"></div>
<div style="left:0px;top:0px;width:1px;height:718px;background:#8a8886;"></div>
<div style="left:1155px;top:0px;width:1px;height:718px;background:#8a8886;"></div>
<div style="left:0px;top:717px;width:1156px;height:1px;background:#8a8886;"></div>
<div style="left:461px;top:157px;width:626px;height:462px;background:#fff;border:1px solid #6a6a6a;box-shadow:0 5px 20px rgba(0,0,0,0.33);"></div>
<svg style="position:absolute;left:469px;top:164px;" width="18" height="17" viewBox="0 0 18 17"><rect x="4" y="0" width="13" height="4" fill="#41a5ee"/><rect x="4" y="4" width="13" height="4" fill="#2b7cd3"/><rect x="4" y="8" width="13" height="4" fill="#185abd"/><rect x="4" y="12" width="13" height="4" fill="#103f91"/><rect x="1" y="2.9" width="10.4" height="10" fill="#185abd"/><path d="M2.6 5l1.5 6 1.9-5 1.9 5 1.5-6" fill="none" stroke="#fff" stroke-width="1.4"/></svg>
<div class="t" style="left:491.00px;top:167px;font-size:12.5px;color:#1a1a1a;transform:scaleX(0.9370);">Insert Picture</div>
<svg style="position:absolute;left:1064px;top:165px;" width="14" height="14" viewBox="0 0 14 14"><path d="M1.5 1.5l11 11M12.5 1.5l-11 11" stroke="#222" stroke-width="1.2"/></svg>
<svg style="position:absolute;left:474px;top:202px;" width="15" height="13" viewBox="0 0 15 13"><path d="M1.5 6.5h12M6.5 1.5l-5 5 5 5" fill="none" stroke="#666" stroke-width="1.5"/></svg>
<svg style="position:absolute;left:504px;top:202px;" width="15" height="13" viewBox="0 0 15 13"><path d="M13.5 6.5h-12M8.5 1.5l5 5-5 5" fill="none" stroke="#c4c4c4" stroke-width="1.5"/></svg>
<svg style="position:absolute;left:530px;top:204px;" width="9" height="7" viewBox="0 0 9 7"><path d="M1.5 1.5l3 3 3-3" fill="none" stroke="#777" stroke-width="1.2"/></svg>
<svg style="position:absolute;left:548px;top:202px;" width="14" height="14" viewBox="0 0 14 14"><path d="M7 13.5V1.5M1.5 7l5.5-5.5 5.5 5.5" fill="none" stroke="#666" stroke-width="1.5"/></svg>
<div style="left:568px;top:193px;width:292px;height:30px;background:#fff;border:1px solid #d9d9d9;"></div>
<div style="left:826px;top:194px;width:1px;height:28px;background:#d9d9d9;"></div>
<svg style="position:absolute;left:572px;top:198px;" width="16" height="18" viewBox="0 0 16 18"><rect x="1.5" y="1.5" width="12.5" height="15" fill="#fcdf82" stroke="#e9c25a" stroke-width="1"/><path d="M11 16.5v-5h3" fill="none" stroke="#e9c25a" stroke-width="1"/></svg>
<div class="t" style="left:591.80px;top:204px;font-size:8.7px;color:#555;transform:scaleX(1.6538);">«</div>
<div class="t" style="left:607.00px;top:203px;font-size:12.5px;color:#1a1a1a;transform:scaleX(0.8720);">PICT...</div>
<svg style="position:absolute;left:648px;top:205px;" width="6" height="9" viewBox="0 0 6 9"><path d="M1.5 1l3.5 3.5-3.5 3.5" fill="none" stroke="#555" stroke-width="1.1"/></svg>
<div class="t" style="left:662.20px;top:203px;font-size:12.5px;color:#1a1a1a;transform:scaleX(0.8647);">IMAGE INSIDE T...</div>
<svg style="position:absolute;left:805px;top:204px;" width="12" height="8" viewBox="0 0 12 8"><path d="M1.5 1.5l4.5 4.5 4.5-4.5" fill="none" stroke="#555" stroke-width="1.3"/></svg>
<svg style="position:absolute;left:838px;top:202px;" width="12" height="13" viewBox="0 0 12 13"><path d="M9.5 4.5a4.5 4.5 0 1 1-3.5-1.5" fill="none" stroke="#666" stroke-width="1.4"/><path d="M5 0.5l2.5 2.5-2.5 2.5" fill="none" stroke="#666" stroke-width="1.3"/></svg>
<div style="left:872px;top:193px;width:202px;height:30px;background:#fff;border:1px solid #d9d9d9;"></div>
<div class="t" style="left:881.20px;top:202px;font-size:12.5px;color:#6d6d6d;transform:scaleX(0.8552);">Search IMAGE INSIDE TEXT</div>
<svg style="position:absolute;left:1052px;top:202px;" width="13" height="13" viewBox="0 0 13 13"><circle cx="7.5" cy="5" r="3.8" fill="none" stroke="#666" stroke-width="1.3"/><path d="M4.8 7.8l-3.8 3.8" stroke="#666" stroke-width="1.5"/></svg>
<div style="left:462px;top:230px;width:624px;height:30px;background:#f5f6f7;border-bottom:1px solid #e8e8e8;"></div>
<div class="t" style="left:480.40px;top:239px;font-size:12.5px;color:#223366;transform:scaleX(0.9167);">Organize</div>
<svg style="position:absolute;left:532px;top:243px;" width="9" height="6" viewBox="0 0 9 6"><path d="M0.5 0.5h8l-4 5z" fill="#223366"/></svg>
<div class="t" style="left:571.50px;top:239px;font-size:12.5px;color:#223366;transform:scaleX(0.9623);">New folder</div>
<svg style="position:absolute;left:964px;top:238px;" width="16" height="13" viewBox="0 0 16 13"><rect x="0.5" y="0.5" width="14" height="11" fill="#fff" stroke="#7a7a7a" stroke-width="1"/><rect x="2" y="2.5" width="11" height="7" fill="#7ab0dc"/><path d="M2 9.5l4-3 3 2 4-2v3z" fill="#3a7b4a"/></svg>
<svg style="position:absolute;left:989px;top:243px;" width="9" height="6" viewBox="0 0 9 6"><path d="M0.5 0.5h8l-4 5z" fill="#223366"/></svg>
<svg style="position:absolute;left:1018px;top:238px;" width="18" height="14" viewBox="0 0 18 14"><rect x="0.5" y="0.5" width="16" height="12" fill="#fff" stroke="#7a7a7a" stroke-width="1"/><rect x="10" y="1" width="6" height="11" fill="#3d8ee0"/><path d="M5 1v11" stroke="#7a7a7a" stroke-width="1"/></svg>
<div style="left:1055px;top:237px;width:16px;height:16px;background:#0f61bf;border-radius:50%;"></div>
<div class="t" style="left:1059.30px;top:239px;font-size:13.1px;color:#fff;font-weight:bold;transform:scaleX(0.8746);">?</div>
<div style="left:602px;top:261px;width:16px;height:281px;background:#f0f0f0;"></div>
<div style="left:603px;top:384px;width:14px;height:133px;background:#cdcdcd;"></div>
<svg style="position:absolute;left:603px;top:264px;" width="14" height="12" viewBox="0 0 14 12"><path d="M3 8l4-4 4 4" fill="none" stroke="#606060" stroke-width="1.6"/></svg>
<svg style="position:absolute;left:603px;top:527px;" width="14" height="12" viewBox="0 0 14 12"><path d="M3 4l4 4 4-4" fill="none" stroke="#606060" stroke-width="1.6"/></svg>
<div style="left:619px;top:261px;width:1px;height:281px;background:#f0f0f0;"></div>
<div style="left:462px;top:493px;width:139px;height:24px;background:#d9d9d9;"></div>
<div class="t" style="left:507.40px;top:275px;font-size:12.5px;color:#1a1a1a;transform:scaleX(0.9205);">OneDrive</div>
<div class="t" style="left:507.40px;top:307px;font-size:12.5px;color:#1a1a1a;transform:scaleX(0.8639);">This PC</div>
<div class="t" style="left:515.20px;top:331px;font-size:12.5px;color:#1a1a1a;transform:scaleX(0.9139);">3D Objects</div>
<div class="t" style="left:515.20px;top:355px;font-size:12.5px;color:#1a1a1a;transform:scaleX(0.9226);">Desktop</div>
<div class="t" style="left:515.20px;top:379px;font-size:12.5px;color:#1a1a1a;transform:scaleX(0.9553);">Documents</div>
<div class="t" style="left:515.00px;top:403px;font-size:12.5px;color:#1a1a1a;transform:scaleX(0.9541);">Downloads</div>
<div class="t" style="left:515.00px;top:427px;font-size:12.5px;color:#1a1a1a;transform:scaleX(0.9774);">Music</div>
<div class="t" style="left:515.00px;top:451px;font-size:12.5px;color:#1a1a1a;transform:scaleX(0.9324);">Pictures</div>
<div class="t" style="left:515.00px;top:475px;font-size:12.5px;color:#1a1a1a;transform:scaleX(0.9158);">Videos</div>
<div class="t" style="left:515.00px;top:499px;font-size:12.5px;color:#1a1a1a;transform:scaleX(0.9102);">Local Disk (C:)</div>
<div class="t" style="left:506.80px;top:531px;font-size:12.5px;color:#1a1a1a;transform:scaleX(0.9875);">Network</div>
<svg style="position:absolute;left:484px;top:274px;" width="20" height="13" viewBox="0 0 20 13"><path d="M5 12h12a3 3 0 0 0 0-6 5 5 0 0 0-9-2A4 4 0 0 0 3 7a3 3 0 0 0 2 5z" fill="#0f78d4"/><path d="M8 12h9a3 3 0 0 0 .3-6" fill="#1c90f3"/></svg>
<svg style="position:absolute;left:485px;top:305px;" width="18" height="17" viewBox="0 0 18 17"><rect x="0.5" y="0.5" width="16" height="11" fill="#5ec4f7" stroke="#3c8dcc" stroke-width="1"/><rect x="2" y="2" width="13" height="8" fill="#8ad8fb"/><rect x="6" y="12" width="5" height="2" fill="#9aa"/><rect x="1" y="14.5" width="15" height="1.5" fill="#6a7c8a"/></svg>
<svg style="position:absolute;left:493px;top:328px;" width="18" height="17" viewBox="0 0 18 17"><path d="M9 1l8 3.5v8.5L9 16.5 1 13V4.5z" fill="#36c3d6"/><path d="M1 4.5L9 8l8-3.5L9 1z" fill="#a8ecf4"/><path d="M9 8v8.5l8-3.5V4.5z" fill="#1493aa"/></svg>
<svg style="position:absolute;left:493px;top:354px;" width="18" height="14" viewBox="0 0 18 14"><rect x="0.5" y="0.5" width="16" height="12" fill="#1b8fe8" stroke="#1370c8" stroke-width="1"/><path d="M2 11.5h13" stroke="#fff" stroke-width="0.8" stroke-dasharray="1 1.5"/></svg>
<svg style="position:absolute;left:495px;top:376px;" width="14" height="18" viewBox="0 0 14 18"><path d="M0.5 0.5h9l3.5 3.5v13.5H0.5z" fill="#fff" stroke="#8a8a8a" stroke-width="1"/><path d="M3 5h4M3 7.5h7M3 10h7M3 12.5h3M7.5 12.5h3M3 15h7" stroke="#3c8ed8" stroke-width="1"/></svg>
<svg style="position:absolute;left:493px;top:399px;" width="18" height="19" viewBox="0 0 18 19"><path d="M6 1h6v8h5l-8 9-8-9h5z" fill="#1e88e5"/></svg>
<svg style="position:absolute;left:495px;top:425px;" width="14" height="18" viewBox="0 0 14 18"><path d="M5 1v12" stroke="#1e88e5" stroke-width="2"/><ellipse cx="3.5" cy="13.5" rx="3" ry="2.8" fill="#1e88e5"/><path d="M5 1c2 2 6 3 5 8" fill="none" stroke="#1e88e5" stroke-width="2"/></svg>
<svg style="position:absolute;left:493px;top:450px;" width="17" height="14" viewBox="0 0 17 14"><rect x="0.5" y="0.5" width="15" height="12" fill="#fff" stroke="#8a8a8a" stroke-width="1"/><rect x="2" y="2" width="12" height="9" fill="#aed4f0"/><path d="M2 11l5-3 3 2 4-2v3z" fill="#5e8a55"/></svg>
<svg style="position:absolute;left:494px;top:472px;" width="16" height="20" viewBox="0 0 16 20"><rect x="0.5" y="0.5" width="14" height="18" fill="#333"/><rect x="3" y="2" width="9" height="15" fill="#4a7fd1"/><path d="M3 10h9" stroke="#e0a030" stroke-width="3"/><g fill="#ddd"><rect x="1" y="2" width="1.3" height="1.5"/><rect x="1" y="6" width="1.3" height="1.5"/><rect x="1" y="10" width="1.3" height="1.5"/><rect x="1" y="14" width="1.3" height="1.5"/><rect x="12.7" y="2" width="1.3" height="1.5"/><rect x="12.7" y="6" width="1.3" height="1.5"/><rect x="12.7" y="10" width="1.3" height="1.5"/><rect x="12.7" y="14" width="1.3" height="1.5"/></g></svg>
<svg style="position:absolute;left:493px;top:495px;" width="18" height="17" viewBox="0 0 18 17"><g fill="#1e9be8"><rect x="1" y="1" width="3" height="3"/><rect x="5" y="1" width="3" height="3"/><rect x="1" y="5" width="3" height="3"/><rect x="5" y="5" width="3" height="3"/></g><rect x="2" y="11" width="15" height="4.5" fill="#4a4a4a"/><rect x="2" y="10" width="15" height="1.5" fill="#9a9a9a"/><rect x="13" y="12.5" width="2" height="1.5" fill="#5ad05a"/></svg>
<svg style="position:absolute;left:484px;top:526px;" width="20" height="16" viewBox="0 0 20 16"><circle cx="12" cy="7" r="6.5" fill="#3aa0e8"/><path d="M8 3c2 1 4 0 6 2s0 4 2 5" fill="none" stroke="#a7e0ff" stroke-width="1.5"/><rect x="1" y="7" width="11" height="9" fill="#2e8fe0"/><rect x="1" y="7" width="11" height="2" fill="#7cc4f5"/></svg>
<div style="left:636px;top:267px;width:105px;height:93px;background:#cce8ff;border:1px solid #99d1ff;"></div>
<svg style="position:absolute;left:642px;top:271px;box-shadow:1px 1px 2px rgba(0,0,0,0.3);" width="90" height="67" viewBox="0 0 90 67"><defs><linearGradient id="sky" x1="0" y1="0" x2="0" y2="1"><stop offset="0" stop-color="#5a5482"/><stop offset="0.16" stop-color="#8b80aa"/><stop offset="0.3" stop-color="#c8b4c8"/><stop offset="0.42" stop-color="#f0d0a8"/><stop offset="0.5" stop-color="#f8c870"/><stop offset="0.57" stop-color="#f59a28"/></linearGradient>
<linearGradient id="gnd" x1="0" y1="0" x2="0" y2="1"><stop offset="0" stop-color="#9a5a14"/><stop offset="0.3" stop-color="#4a2e10"/><stop offset="1" stop-color="#15100a"/></linearGradient>
<radialGradient id="sun"><stop offset="0" stop-color="#fffbe0"/><stop offset="0.3" stop-color="#ffe070"/><stop offset="0.6" stop-color="#ff9a20" stop-opacity="0.5"/><stop offset="1" stop-color="#ff7000" stop-opacity="0"/></radialGradient>
<radialGradient id="glow" gradientUnits="userSpaceOnUse" cx="43" cy="38" r="30" gradientTransform="translate(43 38) scale(1.4 0.8) translate(-43 -38)"><stop offset="0" stop-color="#a05010" stop-opacity="0.7"/><stop offset="1" stop-color="#100c08" stop-opacity="0"/></radialGradient></defs>
<rect width="90" height="67" fill="url(#sky)"/>
<path d="M0 38h90v29H0z" fill="url(#gnd)"/>
<rect x="0" y="38" width="90" height="29" fill="url(#glow)"/>
<ellipse cx="43" cy="36.5" rx="12" ry="6" fill="url(#sun)"/>
<g fill="#17120c">
<path d="M0 0h10l-1 12c1 6 1 12 4 18 3 5 8 7 12 10l-2 2c-5-2-10-5-13-9L0 36z"/>
<path d="M0 36c10 0 18 4 24 8 8 6 14 14 16 23H0z" fill="#0e0b08"/>
<circle cx="26.9" cy="4.5" r="1.7" opacity="0.85"/><circle cx="43.4" cy="4.6" r="1.3" opacity="0.85"/><circle cx="43.3" cy="4.3" r="0.9" opacity="0.85"/><circle cx="25.8" cy="3.5" r="0.9" opacity="0.85"/><circle cx="10.0" cy="5.6" r="1.0" opacity="0.85"/><circle cx="32.8" cy="7.2" r="2.1" opacity="0.85"/><circle cx="19.3" cy="1.6" r="2.2" opacity="0.85"/><circle cx="52.7" cy="4.7" r="1.2" opacity="0.85"/><circle cx="33.7" cy="4.2" r="1.2" opacity="0.85"/><circle cx="33.1" cy="1.3" r="1.6" opacity="0.85"/><circle cx="22.6" cy="0.8" r="1.6" opacity="0.85"/><circle cx="33.9" cy="3.4" r="1.1" opacity="0.85"/><circle cx="24.6" cy="0.1" r="1.2" opacity="0.85"/><circle cx="18.7" cy="1.3" r="1.2" opacity="0.85"/><circle cx="35.1" cy="-1.5" r="1.1" opacity="0.85"/><circle cx="16.9" cy="1.3" r="2.0" opacity="0.85"/><circle cx="28.7" cy="0.5" r="2.2" opacity="0.85"/><circle cx="39.2" cy="5.1" r="1.9" opacity="0.85"/><circle cx="38.0" cy="5.8" r="0.9" opacity="0.85"/><circle cx="20.0" cy="-1.4" r="1.6" opacity="0.85"/><circle cx="37.4" cy="1.2" r="1.8" opacity="0.85"/><circle cx="16.9" cy="0.8" r="1.4" opacity="0.85"/><circle cx="45.5" cy="-3.1" r="1.5" opacity="0.85"/><circle cx="27.8" cy="2.1" r="1.8" opacity="0.85"/><circle cx="7.2" cy="-4.6" r="2.0" opacity="0.85"/><circle cx="27.4" cy="5.9" r="1.7" opacity="0.85"/><circle cx="43.2" cy="3.5" r="1.0" opacity="0.85"/><circle cx="33.1" cy="3.7" r="1.9" opacity="0.85"/><circle cx="36.2" cy="4.6" r="1.3" opacity="0.85"/><circle cx="33.4" cy="2.1" r="1.4" opacity="0.85"/><circle cx="6.3" cy="1.1" r="1.9" opacity="0.85"/><circle cx="36.4" cy="1.2" r="1.4" opacity="0.85"/><circle cx="14.3" cy="7.8" r="2.1" opacity="0.85"/><circle cx="34.4" cy="4.5" r="1.1" opacity="0.85"/><circle cx="31.4" cy="6.4" r="1.6" opacity="0.85"/><circle cx="29.9" cy="3.3" r="1.4" opacity="0.85"/><circle cx="19.4" cy="5.8" r="2.1" opacity="0.85"/><circle cx="24.7" cy="-0.4" r="1.7" opacity="0.85"/><circle cx="28.2" cy="2.1" r="2.1" opacity="0.85"/><circle cx="34.6" cy="-3.0" r="1.9" opacity="0.85"/><circle cx="20.6" cy="4.9" r="0.9" opacity="0.85"/><circle cx="27.1" cy="2.2" r="0.9" opacity="0.85"/><circle cx="31.8" cy="4.7" r="1.3" opacity="0.85"/><circle cx="30.2" cy="3.0" r="1.0" opacity="0.85"/><circle cx="39.2" cy="4.7" r="0.8" opacity="0.85"/><circle cx="41.7" cy="0.1" r="1.0" opacity="0.85"/><circle cx="29.8" cy="5.8" r="1.3" opacity="0.85"/><circle cx="46.7" cy="7.1" r="2.2" opacity="0.85"/><circle cx="16.5" cy="3.7" r="0.9" opacity="0.85"/><circle cx="38.8" cy="4.6" r="1.2" opacity="0.85"/><circle cx="33.4" cy="1.4" r="0.8" opacity="0.85"/><circle cx="44.0" cy="1.9" r="1.0" opacity="0.85"/><circle cx="27.3" cy="2.8" r="1.5" opacity="0.85"/><circle cx="53.7" cy="2.2" r="1.8" opacity="0.85"/><circle cx="29.2" cy="5.9" r="1.0" opacity="0.85"/><circle cx="32.0" cy="-0.7" r="1.9" opacity="0.85"/><circle cx="25.9" cy="4.9" r="1.9" opacity="0.85"/><circle cx="53.4" cy="2.4" r="1.9" opacity="0.85"/><circle cx="38.2" cy="-1.5" r="1.1" opacity="0.85"/><circle cx="18.8" cy="2.7" r="0.8" opacity="0.85"/><circle cx="59.2" cy="4.4" r="1.2" opacity="0.85"/><circle cx="44.0" cy="-3.0" r="1.4" opacity="0.85"/><circle cx="76.7" cy="0.6" r="2.1" opacity="0.85"/><circle cx="47.8" cy="5.6" r="1.1" opacity="0.85"/><circle cx="54.0" cy="5.9" r="1.7" opacity="0.85"/><circle cx="66.0" cy="0.6" r="1.5" opacity="0.85"/><circle cx="42.8" cy="-0.4" r="0.9" opacity="0.85"/><circle cx="41.5" cy="-1.6" r="1.9" opacity="0.85"/><circle cx="52.0" cy="0.6" r="1.0" opacity="0.85"/><circle cx="54.0" cy="1.4" r="1.9" opacity="0.85"/><circle cx="60.9" cy="3.5" r="1.4" opacity="0.85"/><circle cx="65.7" cy="2.4" r="1.0" opacity="0.85"/><circle cx="55.6" cy="5.2" r="2.1" opacity="0.85"/><circle cx="53.8" cy="2.4" r="2.0" opacity="0.85"/><circle cx="65.1" cy="3.5" r="1.3" opacity="0.85"/><circle cx="47.5" cy="3.5" r="0.8" opacity="0.85"/><circle cx="64.8" cy="3.2" r="1.5" opacity="0.85"/><circle cx="60.8" cy="2.7" r="2.0" opacity="0.85"/><circle cx="54.9" cy="2.2" r="1.2" opacity="0.85"/><circle cx="50.2" cy="6.1" r="1.6" opacity="0.85"/><circle cx="51.4" cy="7.1" r="1.0" opacity="0.85"/><circle cx="59.1" cy="2.5" r="1.4" opacity="0.85"/><circle cx="35.1" cy="0.7" r="1.4" opacity="0.85"/><circle cx="61.2" cy="2.3" r="1.5" opacity="0.85"/><circle cx="50.3" cy="3.9" r="1.4" opacity="0.85"/><circle cx="52.3" cy="4.2" r="1.9" opacity="0.85"/><circle cx="56.8" cy="7.0" r="1.8" opacity="0.85"/><circle cx="44.5" cy="3.1" r="1.5" opacity="0.85"/><circle cx="37.2" cy="2.2" r="0.9" opacity="0.85"/><circle cx="45.7" cy="3.2" r="1.2" opacity="0.85"/><circle cx="53.5" cy="0.5" r="1.6" opacity="0.85"/><circle cx="53.2" cy="-2.6" r="1.4" opacity="0.85"/><circle cx="43.9" cy="1.7" r="1.5" opacity="0.85"/><circle cx="48.5" cy="0.9" r="1.5" opacity="0.85"/><circle cx="30.8" cy="5.0" r="1.8" opacity="0.85"/><circle cx="67.3" cy="-1.0" r="1.2" opacity="0.85"/><circle cx="31.9" cy="1.4" r="2.0" opacity="0.85"/><circle cx="55.0" cy="5.2" r="1.4" opacity="0.85"/><circle cx="58.0" cy="5.0" r="0.9" opacity="0.85"/><circle cx="44.4" cy="-0.6" r="2.1" opacity="0.85"/><circle cx="60.1" cy="7.9" r="1.7" opacity="0.85"/><circle cx="63.6" cy="8.9" r="2.2" opacity="0.85"/><circle cx="56.2" cy="11.3" r="1.4" opacity="0.85"/><circle cx="24.8" cy="4.7" r="2.0" opacity="0.85"/><circle cx="57.1" cy="6.7" r="1.5" opacity="0.85"/><circle cx="62.6" cy="8.7" r="1.2" opacity="0.85"/><circle cx="63.9" cy="6.4" r="1.6" opacity="0.85"/><circle cx="63.3" cy="7.2" r="1.3" opacity="0.85"/><circle cx="60.6" cy="4.5" r="0.9" opacity="0.85"/><circle cx="71.0" cy="6.5" r="2.2" opacity="0.85"/><circle cx="66.5" cy="8.4" r="0.9" opacity="0.85"/><circle cx="64.6" cy="4.7" r="1.0" opacity="0.85"/><circle cx="56.2" cy="10.1" r="1.9" opacity="0.85"/><circle cx="63.9" cy="8.7" r="2.1" opacity="0.85"/><circle cx="58.4" cy="5.0" r="0.9" opacity="0.85"/><circle cx="69.7" cy="8.6" r="1.4" opacity="0.85"/><circle cx="72.5" cy="10.1" r="1.7" opacity="0.85"/><circle cx="64.5" cy="5.8" r="2.0" opacity="0.85"/><circle cx="71.3" cy="9.4" r="1.4" opacity="0.85"/><circle cx="61.3" cy="10.2" r="2.1" opacity="0.85"/><circle cx="63.8" cy="8.6" r="1.5" opacity="0.85"/><circle cx="64.1" cy="8.4" r="1.0" opacity="0.85"/><circle cx="66.6" cy="7.6" r="1.2" opacity="0.85"/><circle cx="61.7" cy="11.8" r="1.2" opacity="0.85"/><circle cx="61.5" cy="7.0" r="1.3" opacity="0.85"/><circle cx="75.0" cy="16.4" r="0.8" opacity="0.85"/><circle cx="71.5" cy="9.7" r="1.1" opacity="0.85"/><circle cx="62.8" cy="17.8" r="0.9" opacity="0.85"/><circle cx="73.8" cy="11.2" r="1.5" opacity="0.85"/><circle cx="74.0" cy="11.7" r="1.5" opacity="0.85"/><circle cx="67.7" cy="2.9" r="1.3" opacity="0.85"/><circle cx="75.1" cy="9.2" r="1.7" opacity="0.85"/><circle cx="68.9" cy="18.6" r="0.9" opacity="0.85"/><circle cx="73.1" cy="17.4" r="1.8" opacity="0.85"/><circle cx="71.9" cy="19.0" r="0.9" opacity="0.85"/><circle cx="76.4" cy="7.5" r="1.7" opacity="0.85"/><circle cx="71.4" cy="19.6" r="1.2" opacity="0.85"/><circle cx="69.7" cy="16.7" r="1.4" opacity="0.85"/><circle cx="71.2" cy="28.7" r="2.2" opacity="0.85"/><circle cx="69.1" cy="14.9" r="2.2" opacity="0.85"/><circle cx="70.6" cy="20.4" r="0.8" opacity="0.85"/><circle cx="68.7" cy="19.8" r="1.5" opacity="0.85"/><circle cx="73.4" cy="21.6" r="0.8" opacity="0.85"/><circle cx="71.8" cy="18.2" r="1.4" opacity="0.85"/><circle cx="72.8" cy="16.3" r="1.2" opacity="0.85"/><circle cx="72.6" cy="22.6" r="1.5" opacity="0.85"/><circle cx="72.0" cy="8.7" r="1.8" opacity="0.85"/><circle cx="74.9" cy="12.6" r="1.3" opacity="0.85"/><circle cx="74.3" cy="15.7" r="1.8" opacity="0.85"/><circle cx="71.3" cy="14.8" r="2.0" opacity="0.85"/><circle cx="76.4" cy="11.6" r="1.8" opacity="0.85"/><circle cx="72.8" cy="13.5" r="1.5" opacity="0.85"/><circle cx="64.4" cy="15.7" r="1.9" opacity="0.85"/><circle cx="74.4" cy="10.1" r="2.0" opacity="0.85"/><circle cx="69.5" cy="9.0" r="1.1" opacity="0.85"/><circle cx="13.1" cy="12.8" r="1.3" opacity="0.85"/><circle cx="19.0" cy="21.3" r="1.6" opacity="0.85"/><circle cx="4.2" cy="3.9" r="1.8" opacity="0.85"/><circle cx="9.5" cy="12.0" r="1.9" opacity="0.85"/><circle cx="9.9" cy="2.5" r="1.5" opacity="0.85"/><circle cx="8.8" cy="9.5" r="1.8" opacity="0.85"/><circle cx="10.0" cy="15.1" r="1.2" opacity="0.85"/><circle cx="9.5" cy="6.6" r="1.8" opacity="0.85"/><circle cx="16.9" cy="10.6" r="1.3" opacity="0.85"/><circle cx="1.0" cy="13.6" r="1.9" opacity="0.85"/><circle cx="3.6" cy="4.3" r="0.9" opacity="0.85"/><circle cx="12.8" cy="16.9" r="1.8" opacity="0.85"/><circle cx="7.4" cy="21.8" r="0.8" opacity="0.85"/><circle cx="14.4" cy="14.4" r="1.7" opacity="0.85"/><circle cx="6.8" cy="0.8" r="1.2" opacity="0.85"/><circle cx="3.3" cy="11.1" r="1.5" opacity="0.85"/><circle cx="19.3" cy="23.5" r="1.1" opacity="0.85"/><circle cx="23.9" cy="9.4" r="0.8" opacity="0.85"/><circle cx="-0.7" cy="15.8" r="2.2" opacity="0.85"/><circle cx="5.5" cy="14.0" r="1.1" opacity="0.85"/><circle cx="13.9" cy="10.2" r="1.6" opacity="0.85"/><circle cx="14.6" cy="19.6" r="2.1" opacity="0.85"/><circle cx="17.5" cy="23.0" r="1.5" opacity="0.85"/><circle cx="17.1" cy="3.9" r="1.1" opacity="0.85"/><circle cx="15.5" cy="6.5" r="0.8" opacity="0.85"/><circle cx="17.0" cy="12.2" r="1.4" opacity="0.85"/><circle cx="8.9" cy="16.2" r="1.3" opacity="0.85"/><circle cx="5.4" cy="26.0" r="0.8" opacity="0.85"/><circle cx="10.1" cy="-3.3" r="1.0" opacity="0.85"/><circle cx="18.5" cy="6.4" r="2.1" opacity="0.85"/><circle cx="8.6" cy="19.5" r="1.4" opacity="0.85"/><circle cx="18.0" cy="11.9" r="1.3" opacity="0.85"/><circle cx="5.7" cy="14.8" r="0.9" opacity="0.85"/><circle cx="19.1" cy="21.1" r="1.2" opacity="0.85"/><circle cx="14.2" cy="9.6" r="1.2" opacity="0.85"/><circle cx="6.1" cy="11.6" r="1.3" opacity="0.85"/><circle cx="22.0" cy="7.5" r="1.9" opacity="0.85"/><circle cx="1.0" cy="-1.0" r="2.1" opacity="0.85"/><circle cx="0.9" cy="8.1" r="0.9" opacity="0.85"/><circle cx="9.3" cy="3.3" r="1.9" opacity="0.85"/><circle cx="19.5" cy="17.4" r="0.9" opacity="0.7"/><circle cx="24.3" cy="19.1" r="1.5" opacity="0.7"/><circle cx="19.7" cy="22.8" r="1.8" opacity="0.7"/><circle cx="25.8" cy="19.5" r="1.7" opacity="0.7"/><circle cx="20.0" cy="24.8" r="1.4" opacity="0.7"/><circle cx="23.5" cy="22.1" r="1.1" opacity="0.7"/><circle cx="26.9" cy="17.4" r="1.1" opacity="0.7"/><circle cx="36.0" cy="12.5" r="1.4" opacity="0.7"/><circle cx="24.1" cy="22.0" r="0.9" opacity="0.7"/><circle cx="20.8" cy="21.5" r="1.1" opacity="0.7"/><circle cx="21.7" cy="25.2" r="2.0" opacity="0.7"/><circle cx="22.0" cy="15.9" r="1.4" opacity="0.7"/><circle cx="17.2" cy="19.4" r="1.3" opacity="0.7"/><circle cx="25.7" cy="21.2" r="2.2" opacity="0.7"/><circle cx="26.2" cy="23.4" r="1.7" opacity="0.7"/><circle cx="24.3" cy="17.9" r="1.2" opacity="0.7"/><circle cx="22.0" cy="24.0" r="1.4" opacity="0.7"/><circle cx="31.3" cy="17.8" r="2.0" opacity="0.7"/><circle cx="23.3" cy="20.1" r="1.8" opacity="0.7"/><circle cx="26.5" cy="17.2" r="1.6" opacity="0.7"/><circle cx="36.0" cy="34.0" r="2.1" opacity="0.9"/><circle cx="35.4" cy="28.8" r="2.2" opacity="0.9"/><circle cx="30.0" cy="35.4" r="1.0" opacity="0.9"/><circle cx="21.0" cy="33.4" r="2.1" opacity="0.9"/><circle cx="28.5" cy="29.7" r="1.9" opacity="0.9"/><circle cx="22.7" cy="35.0" r="0.9" opacity="0.9"/><circle cx="30.9" cy="31.9" r="2.1" opacity="0.9"/><circle cx="26.9" cy="32.0" r="1.0" opacity="0.9"/><circle cx="29.9" cy="38.3" r="1.8" opacity="0.9"/><circle cx="31.7" cy="34.7" r="1.5" opacity="0.9"/><circle cx="24.8" cy="32.5" r="1.1" opacity="0.9"/><circle cx="29.3" cy="33.7" r="1.2" opacity="0.9"/><circle cx="15.3" cy="35.9" r="1.7" opacity="0.9"/><circle cx="35.1" cy="31.7" r="1.1" opacity="0.9"/><circle cx="30.3" cy="41.6" r="1.8" opacity="0.9"/><circle cx="29.6" cy="34.6" r="1.5" opacity="0.9"/><circle cx="27.1" cy="31.2" r="1.2" opacity="0.9"/><circle cx="23.2" cy="28.1" r="1.1" opacity="0.9"/><circle cx="35.3" cy="34.6" r="1.4" opacity="0.9"/><circle cx="28.4" cy="32.2" r="1.9" opacity="0.9"/><circle cx="29.5" cy="30.5" r="1.1" opacity="0.9"/><circle cx="35.1" cy="33.5" r="1.9" opacity="0.9"/><circle cx="30.5" cy="36.1" r="1.9" opacity="0.9"/><circle cx="25.9" cy="41.1" r="1.5" opacity="0.9"/><circle cx="31.6" cy="36.0" r="1.4" opacity="0.9"/><circle cx="56.3" cy="17.8" r="1.0" opacity="0.7"/><circle cx="58.4" cy="22.9" r="2.2" opacity="0.7"/><circle cx="60.6" cy="22.5" r="0.9" opacity="0.7"/><circle cx="55.0" cy="24.7" r="2.0" opacity="0.7"/><circle cx="58.9" cy="15.1" r="2.1" opacity="0.7"/><circle cx="59.1" cy="23.1" r="2.1" opacity="0.7"/><circle cx="60.0" cy="21.5" r="1.7" opacity="0.7"/><circle cx="57.9" cy="23.3" r="1.3" opacity="0.7"/><circle cx="60.1" cy="22.1" r="1.2" opacity="0.7"/><circle cx="55.5" cy="26.0" r="1.0" opacity="0.7"/>
<path d="M8 20c6-6 12-9 20-12 8-2 16-3 26-4M14 26c10-3 22-2 34-1 8 1 14-2 22-6M28 36c-4-3-8-5-12-5" fill="none" stroke="#17120c" stroke-width="1"/>
</g></svg>
<div class="t" style="left:662.00px;top:345px;font-size:12.5px;color:#1a1a1a;transform:scaleX(0.9191);">SUN-5.jpg</div>
<div style="left:462px;top:542px;width:624px;height:76px;background:#f0f0f0;"></div>
<div class="t" style="left:592.20px;top:558px;font-size:12.5px;color:#1a1a1a;transform:scaleX(0.9117);">File name:</div>
<div style="left:650px;top:551px;width:219px;height:24px;background:#fff;border:1px solid #7a7a7a;"></div>
<div class="t" style="left:655.30px;top:558px;font-size:12.5px;color:#1a1a1a;transform:scaleX(0.9226);">SUN-5.jpg</div>
<svg style="position:absolute;left:853px;top:559px;" width="12" height="8" viewBox="0 0 12 8"><path d="M1.5 1.5l4.5 4.5 4.5-4.5" fill="none" stroke="#555" stroke-width="1.1"/></svg>
<div style="left:881px;top:551px;width:188px;height:23px;background:#e1e1e1;border:1px solid #adadad;"></div>
<div class="t" style="left:885.50px;top:557px;font-size:12.5px;color:#1a1a1a;transform:scaleX(0.9627);">All Pictures (*.emf;*.wmf;*.jpg;*</div>
<svg style="position:absolute;left:1054px;top:559px;" width="12" height="8" viewBox="0 0 12 8"><path d="M1.5 1.5l4.5 4.5 4.5-4.5" fill="none" stroke="#555" stroke-width="1.1"/></svg>
<div class="t" style="left:814.90px;top:587px;font-size:12.5px;color:#1a1a1a;transform:scaleX(0.8877);">Tools</div>
<svg style="position:absolute;left:856px;top:591px;" width="10" height="6" viewBox="0 0 10 6"><path d="M0.5 0.5h9l-4.5 5z" fill="#333"/></svg>
<div style="left:877px;top:577px;width:94px;height:33px;border:3.5px solid #000;border-radius:5px;"></div>
<div style="left:881px;top:581px;width:88px;height:25px;background:#e1e1e1;border:2px solid #0078d7;"></div>
<div style="left:954px;top:585px;width:1.3px;height:17px;background:#555;"></div>
<svg style="position:absolute;left:956px;top:590px;" width="12" height="7" viewBox="0 0 12 7"><path d="M0.5 0.5h10l-5 6z" fill="#000"/></svg>
<div class="t" style="left:903.40px;top:587px;font-size:12.5px;color:#1a1a1a;transform:scaleX(0.9020);">Insert</div>
<div style="left:982px;top:581px;width:86px;height:24px;background:#e1e1e1;border:1px solid #adadad;"></div>
<div class="t" style="left:1007.60px;top:587px;font-size:12.5px;color:#1a1a1a;transform:scaleX(0.8995);">Cancel</div>
<svg style="position:absolute;left:1078px;top:607px;" width="8" height="8" viewBox="0 0 8 8"><g fill="#b8b8b8"><rect x="5" y="1" width="1.5" height="1.5"/><rect x="3" y="3" width="1.5" height="1.5"/><rect x="5" y="3" width="1.5" height="1.5"/><rect x="1" y="5" width="1.5" height="1.5"/><rect x="3" y="5" width="1.5" height="1.5"/><rect x="5" y="5" width="1.5" height="1.5"/></g></svg>
<div class="t" style="left:767.00px;top:383px;font-size:23.55px;color:#000;font-weight:bold;transform:scaleX(1.0560);">Selected Picture</div>
<div class="t" style="left:756.80px;top:645px;font-size:22.65px;color:#000;font-weight:bold;transform:scaleX(1.0963);">Insert Button</div>
<svg style="position:absolute;left:740px;top:305px;" width="120" height="85" viewBox="0 0 120 85"><path d="M18 15.2L109 77.6" stroke="#000" stroke-width="2.6"/><path d="M10.4 10L27.5 14.5 20.3 16.8 20 24.5z" fill="#000" stroke="#000" stroke-width="0.8" stroke-linejoin="miter"/></svg>
<svg style="position:absolute;left:835px;top:600px;" width="65" height="55" viewBox="0 0 65 55"><path d="M9.7 45.3L47 18" stroke="#000" stroke-width="2.6"/><path d="M55.2 11.8L42 17 45.5 18.9 46 26.5z" fill="#000" stroke="#000" stroke-width="0.8"/></svg>
</body></html>
